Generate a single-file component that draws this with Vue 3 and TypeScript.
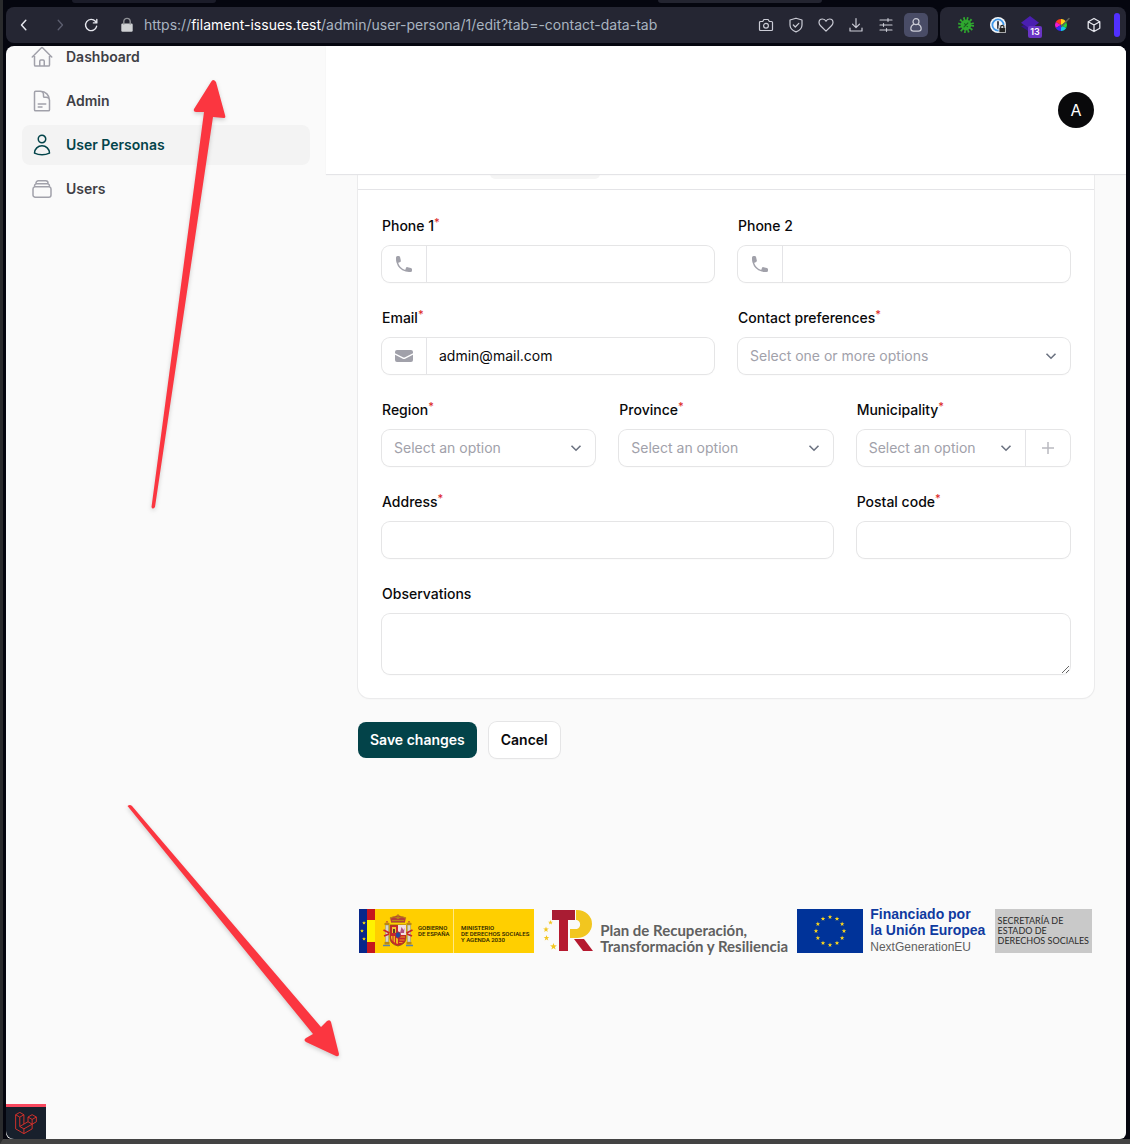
<script setup lang="ts">
import { reactive } from 'vue'

interface NavItem {
  label: string
  icon: string
  active?: boolean
}

interface ToolIcon {
  label: string
  paths: string[]
  active?: boolean
}

const navItems: NavItem[] = [
  {
    label: 'Dashboard',
    icon: 'm2.25 12 8.954-8.955c.44-.439 1.152-.439 1.591 0L21.75 12M4.5 9.75v10.125c0 .621.504 1.125 1.125 1.125H9.75v-4.875c0-.621.504-1.125 1.125-1.125h2.25c.621 0 1.125.504 1.125 1.125V21h4.125c.621 0 1.125-.504 1.125-1.125V9.75M8.25 21h8.25',
  },
  {
    label: 'Admin',
    icon: 'M19.5 14.25v-2.625a3.375 3.375 0 0 0-3.375-3.375h-1.5A1.125 1.125 0 0 1 13.5 7.125v-1.5a3.375 3.375 0 0 0-3.375-3.375H8.25m0 12.75h7.5m-7.5 3H12M10.5 2.25H5.625c-.621 0-1.125.504-1.125 1.125v17.25c0 .621.504 1.125 1.125 1.125h12.75c.621 0 1.125-.504 1.125-1.125V11.25a9 9 0 0 0-9-9Z',
  },
  {
    label: 'User Personas',
    icon: 'M15.75 6a3.75 3.75 0 1 1-7.5 0 3.75 3.75 0 0 1 7.5 0ZM4.501 20.118a7.5 7.5 0 0 1 14.998 0A17.933 17.933 0 0 1 12 21.75c-2.676 0-5.216-.584-7.499-1.632Z',
    active: true,
  },
  {
    label: 'Users',
    icon: 'M6 6.878V6a2.25 2.25 0 0 1 2.25-2.25h7.5A2.25 2.25 0 0 1 18 6v.878m-12 0c.235-.083.487-.128.75-.128h10.5c.263 0 .515.045.75.128m-12 0A2.25 2.25 0 0 0 4.5 9v.878m13.5-3A2.25 2.25 0 0 1 19.5 9v.878m0 0a2.246 2.246 0 0 0-.75-.128H5.25c-.263 0-.515.045-.75.128m15 0A2.25 2.25 0 0 1 21 12v6a2.25 2.25 0 0 1-2.25 2.25H5.25A2.25 2.25 0 0 1 3 18v-6c0-.98.626-1.813 1.5-2.122',
  },
]

const tools: ToolIcon[] = [
  {
    label: 'Snapshot',
    paths: [
      'M1.5 5.5a1 1 0 0 1 1-1h2.2l1.2-2h4.2l1.2 2h2.2a1 1 0 0 1 1 1v7a1 1 0 0 1-1 1h-11a1 1 0 0 1-1-1Z',
      'M10.4 8.8a2.4 2.4 0 1 1-4.8 0a2.4 2.4 0 0 1 4.8 0Z',
    ],
  },
  {
    label: 'Protection',
    paths: ['M8 1.2 14 3v5c0 3.2-2.6 5.6-6 6.9C4.600 13.600 2 11.200 2 8V3Z', 'm5.300 8 2 2 3.500-3.700'],
  },
  {
    label: 'Favourite',
    paths: ['M8 14.200 2.300 8.500A3.800 3.800 0 0 1 1 5.600C1 3.500 2.600 2 4.500 2 6 2 7.300 2.800 8 4.200 8.700 2.800 10 2 11.500 2 13.400 2 15 3.500 15 5.600c0 1.100-.5 2.100-1.300 2.900Z'],
  },
  { label: 'Downloads', paths: ['M8 1.500v9M4.500 7.200 8 10.700l3.500-3.500M2 11v3h12v-3'] },
  { label: 'Easy setup', paths: ['M2 3h12M2 8h12M2 13h12M10 1.700v2.600M5.500 6.700v2.600M8.500 11.700v2.600'] },
  {
    label: 'Profile',
    paths: ['M11 4.700a3 3 0 1 1-6 0a3 3 0 0 1 6 0Z', 'M5.800 7.200C4 8 2.800 9.700 2.800 11.600c0 1.600 1.200 2.600 2.700 2.600h5c1.500 0 2.700-1 2.700-2.600 0-1.900-1.200-3.600-3-4.400'],
    active: true,
  },
]

const phoneIcon: string =
  'M2 3.500A1.500 1.500 0 0 1 3.500 2h1.148a1.500 1.500 0 0 1 1.465 1.175l.716 3.223a1.500 1.500 0 0 1-1.052 1.767l-.933.267c-.41.117-.643.555-.48.95a11.542 11.542 0 0 0 6.254 6.254c.395.163.833-.07.95-.48l.267-.933a1.500 1.500 0 0 1 1.767-1.052l3.223.716A1.500 1.500 0 0 1 18 15.352V16.500a1.500 1.500 0 0 1-1.500 1.500H15c-1.149 0-2.263-.15-3.326-.43A13.022 13.022 0 0 1 2.430 8.326 13.019 13.019 0 0 1 2 5V3.500Z'
const envelopeIcon: string =
  'M3 4a2 2 0 0 0-2 2v1.161l8.441 4.221a1.250 1.250 0 0 0 1.118 0L19 7.162V6a2 2 0 0 0-2-2H3ZM19 8.839l-7.770 3.885a2.750 2.750 0 0 1-2.460 0L1 8.839V14a2 2 0 0 0 2 2h14a2 2 0 0 0 2-2V8.839Z'

const form = reactive({
  phone1: '',
  phone2: '',
  email: 'admin@mail.com',
  preferences: '',
  region: '',
  province: '',
  municipality: '',
  address: '',
  postalCode: '',
  observations: '',
})

/* Points of a five-pointed star around a centre. */
function star(cx: number, cy: number, r: number): string {
  return Array.from({ length: 10 }, (_, i) => {
    const radius = i % 2 === 0 ? r : r * 0.4
    const angle = (Math.PI / 5) * i - Math.PI / 2
    return `${(cx + radius * Math.cos(angle)).toFixed(2)},${(cy + radius * Math.sin(angle)).toFixed(2)}`
  }).join(' ')
}

const euStars: string[] = Array.from({ length: 12 }, (_, i) => {
  const angle = (Math.PI / 6) * i
  return star(33 + 14 * Math.sin(angle), 22 - 14 * Math.cos(angle), 2.4)
})
</script>

<template>
  <div class="browser">
    <div class="tab-strip">
      <span class="tab-edge"></span>
      <span class="tab-edge tab-edge-far"></span>
    </div>

    <header class="chrome">
      <div class="address-bar">
        <button class="tool" type="button" aria-label="Back">
          <svg viewBox="0 0 16 16"><path d="M9.800 3.300 5.500 8l4.300 4.700" stroke="#e6e7ee" stroke-width="1.500" /></svg>
        </button>
        <button class="tool tool-forward" type="button" aria-label="Forward">
          <svg viewBox="0 0 16 16"><path d="M6.200 3.300 10.500 8l-4.300 4.700" stroke="#5d5f70" stroke-width="1.300" /></svg>
        </button>
        <button class="tool tool-reload" type="button" aria-label="Reload">
          <svg viewBox="0 0 16 16"><path d="M13.600 9.300A5.600 5.600 0 1 1 12.400 4.300L13.700 5.800M13.800 2.500v3.400h-3.400" stroke="#e6e7ee" stroke-width="1.400" /></svg>
        </button>
        <span class="lock">
          <svg viewBox="0 0 16 16"><rect x="2.300" y="6.500" width="11.400" height="8.300" rx="1.200" fill="#cfd1d4" /><path d="M4.800 7V4.600a3.200 3.200 0 0 1 6.400 0V7" stroke="#8f9196" stroke-width="1.400" /></svg>
        </span>
        <div class="url">https://<span class="host">filament-issues.test</span>/admin/user-persona/1/edit?tab=-contact-data-tab</div>
        <div class="tools">
          <button v-for="tool in tools" :key="tool.label" class="tool" :class="{ 'tool-active': tool.active }" type="button" :aria-label="tool.label">
            <svg viewBox="0 0 16 16"><path v-for="d in tool.paths" :key="d" :d="d" /></svg>
          </button>
        </div>
      </div>

      <div class="extensions">
        <button class="tool" type="button" aria-label="Debug helper">
          <svg viewBox="0 0 16 16">
            <circle cx="8" cy="8" r="6.500" stroke="#2fa82f" stroke-width="3" stroke-linecap="butt" stroke-dasharray="1.600 1.800" />
            <circle cx="8" cy="8" r="5.400" fill="#2fa82f" stroke="none" />
            <path d="M6 9.800 9.900 6M6.500 6.600l3 3" stroke="#1c5f22" stroke-width="1.100" />
          </svg>
        </button>
        <button class="tool" type="button" aria-label="Password manager">
          <svg viewBox="0 0 16 16">
            <circle cx="8" cy="8" r="8" fill="#f4f6f8" stroke="none" />
            <circle cx="8" cy="8" r="5.600" stroke="#3f97e8" stroke-width="1.800" />
            <path d="M8 5v6" stroke="#2b2f3a" stroke-width="1.800" />
            <rect x="8.500" y="8" width="7.500" height="8" rx="1" fill="#d4d6d8" stroke="none" />
            <rect x="9.400" y="11" width="5.800" height="4.300" rx=".6" fill="#222" stroke="none" />
            <path d="M10.700 11v-1a1.600 1.600 0 0 1 3.200 0v1" stroke="#222" stroke-width="1.100" />
          </svg>
        </button>
        <button class="tool tool-badged" type="button" aria-label="Stack">
          <svg viewBox="0 0 16 16"><path d="M8 0 16 6 8 12 0 6Z" fill="#4a1fb0" stroke="none" /><path d="m0 9 8 5.500V12L3 8Z" fill="#35138c" stroke="none" /></svg>
          <span class="badge">13</span>
        </button>
        <button class="tool" type="button" aria-label="Colour picker">
          <svg viewBox="0 0 16 16">
            <path d="M7 8V2a6 6 0 0 1 5.200 3Z" fill="#ffd21a" stroke="none" />
            <path d="M7 8V2a6 6 0 0 0-5.200 3Z" fill="#ff3b1c" stroke="none" />
            <path d="M7 8 1.800 5a6 6 0 0 0 0 6Z" fill="#f01ad0" stroke="none" />
            <path d="M7 8 1.800 11A6 6 0 0 0 7 14Z" fill="#3827f5" stroke="none" />
            <path d="M7 8v6a6 6 0 0 0 5.200-3Z" fill="#12c9e8" stroke="none" />
            <path d="m7 8 5.200 3a6 6 0 0 0 0-6Z" fill="#28d636" stroke="none" />
            <path d="m7.500 9.500 7.500-8" stroke="#5d6258" stroke-width="1.500" />
          </svg>
        </button>
        <button class="tool" type="button" aria-label="Extensions">
          <svg viewBox="0 0 16 16"><path d="m8 1.500 5.800 3.200v6.600L8 14.500l-5.800-3.200V4.700ZM2.200 4.700 8 8l5.800-3.300M8 8v6.500" stroke="#e6e7ee" stroke-width="1.300" /></svg>
        </button>
        <span class="side-handle"></span>
      </div>
    </header>

    <div class="page">
      <aside class="sidebar">
        <nav class="nav">
          <a v-for="item in navItems" :key="item.label" href="#" class="nav-link" :class="{ 'nav-active': item.active }">
            <svg viewBox="0 0 24 24"><path :d="item.icon" /></svg>
            <span>{{ item.label }}</span>
          </a>
        </nav>
      </aside>

      <div class="main">
        <div class="topbar">
          <button class="avatar" type="button">A</button>
        </div>

        <main class="content">
          <form class="form" @submit.prevent>
            <section class="card">
              <div class="tabs"><span class="tab-current"></span></div>
              <div class="fields">
                <div class="field span-3">
                  <label for="phone1">Phone 1<sup>*</sup></label>
                  <div class="control">
                    <span class="prefix"><svg viewBox="0 0 20 20"><path :d="phoneIcon" /></svg></span>
                    <input id="phone1" v-model="form.phone1" type="tel" />
                  </div>
                </div>
                <div class="field span-3">
                  <label for="phone2">Phone 2</label>
                  <div class="control">
                    <span class="prefix"><svg viewBox="0 0 20 20"><path :d="phoneIcon" /></svg></span>
                    <input id="phone2" v-model="form.phone2" type="tel" />
                  </div>
                </div>
                <div class="field span-3">
                  <label for="email">Email<sup>*</sup></label>
                  <div class="control">
                    <span class="prefix"><svg viewBox="0 0 20 20"><path :d="envelopeIcon" /></svg></span>
                    <input id="email" v-model="form.email" type="email" />
                  </div>
                </div>
                <div class="field span-3">
                  <label for="preferences">Contact preferences<sup>*</sup></label>
                  <div class="control">
                    <div class="picker">
                      <select id="preferences" v-model="form.preferences"><option value="">Select one or more options</option></select>
                      <svg viewBox="0 0 12 12"><path d="m1.500 3.700 4.500 4.500 4.500-4.500" /></svg>
                    </div>
                  </div>
                </div>
                <div class="field span-2">
                  <label for="region">Region<sup>*</sup></label>
                  <div class="control">
                    <div class="picker">
                      <select id="region" v-model="form.region"><option value="">Select an option</option></select>
                      <svg viewBox="0 0 12 12"><path d="m1.500 3.700 4.500 4.500 4.500-4.500" /></svg>
                    </div>
                  </div>
                </div>
                <div class="field span-2">
                  <label for="province">Province<sup>*</sup></label>
                  <div class="control">
                    <div class="picker">
                      <select id="province" v-model="form.province"><option value="">Select an option</option></select>
                      <svg viewBox="0 0 12 12"><path d="m1.500 3.700 4.500 4.500 4.500-4.500" /></svg>
                    </div>
                  </div>
                </div>
                <div class="field span-2">
                  <label for="municipality">Municipality<sup>*</sup></label>
                  <div class="control">
                    <div class="picker">
                      <select id="municipality" v-model="form.municipality"><option value="">Select an option</option></select>
                      <svg viewBox="0 0 12 12"><path d="m1.500 3.700 4.500 4.500 4.500-4.500" /></svg>
                    </div>
                    <button class="suffix" type="button" aria-label="Create municipality">
                      <svg viewBox="0 0 20 20"><path d="M10 4v12M4 10h12" /></svg>
                    </button>
                  </div>
                </div>
                <div class="field span-4">
                  <label for="address">Address<sup>*</sup></label>
                  <div class="control"><input id="address" v-model="form.address" type="text" /></div>
                </div>
                <div class="field span-2">
                  <label for="postal">Postal code<sup>*</sup></label>
                  <div class="control"><input id="postal" v-model="form.postalCode" type="text" /></div>
                </div>
                <div class="field span-6">
                  <label for="observations">Observations</label>
                  <div class="control"><textarea id="observations" v-model="form.observations" rows="2"></textarea></div>
                </div>
              </div>
            </section>

            <div class="actions">
              <button class="btn btn-primary" type="submit">Save changes</button>
              <button class="btn btn-plain" type="button">Cancel</button>
            </div>
          </form>
        </main>

        <footer class="sponsors">
          <div class="gov">
            <svg class="gov-flags" viewBox="0 0 16 44" preserveAspectRatio="none">
              <rect width="8" height="44" fill="#07278a" />
              <rect x="8" width="8" height="44" fill="#c5161d" />
              <rect x="8" y="11" width="8" height="22" fill="#fff200" />
              <polygon v-for="p in [star(5, 14, 2), star(3, 22, 2), star(5, 30, 2)]" :key="p" :points="p" fill="#ffe600" />
            </svg>
            <svg class="gov-arms" viewBox="0 0 32 34">
              <path d="M9 8 8 3.500 12 2.500 16 1l4 1.500 4 1L23 8Z" fill="#b5403a" />
              <path d="M8 4.500Q12 1 16 4.500 20 1 24 4.500M16 0v4M9 8.500h14M10 6.500h12" stroke="#b98814" stroke-width="1.200" fill="none" />
              <path d="M8 11h16v13q0 6-8 8-8-2-8-8Z" fill="#c9252c" stroke="#86571a" stroke-width=".8" />
              <path d="M16 11h8v10h-8Z" fill="#f1dfdf" />
              <path d="m18 19 1.500-6 2 3 1-2-.5 5Z" fill="#b04f80" />
              <path d="M10 13h4v6h-4Z" fill="#f1c232" /><path d="M11 15h2v4h-2Z" fill="#5c3b2a" />
              <path d="M9 22h7v8q-6-2-7-6Z" fill="#efb71d" /><path d="M11 22v6M13.500 22v8" stroke="#c9252c" stroke-width="1" />
              <path d="M18 23h5M17.500 26h5M17 28.500h3.500" stroke="#efb71d" stroke-width=".8" />
              <ellipse cx="16" cy="21" rx="2.600" ry="3.200" fill="#234a9c" stroke="#c9252c" stroke-width=".8" />
              <path d="M3.500 11h3v17h-3ZM25.500 11h3v17h-3Z" fill="#d8d5cc" stroke="#8a8c85" stroke-width=".5" />
              <path d="M2.500 9h5v2h-5ZM24.500 9h5v2h-5ZM2.500 28h5v2.500h-5ZM24.500 28h5v2.500h-5Z" fill="#b98814" />
              <path d="M1 31.500h7M24 31.500h7" stroke="#5c83a8" stroke-width="1.500" />
              <path d="m1.500 16 6 3M2 22l5-2M24.500 19l6-3M25 20l5 2" stroke="#c9252c" stroke-width="1.800" />
              <path d="M3.500 8.500q1.500-3 3 0ZM25.500 8.500q1.500-3 3 0Z" fill="#b5403a" />
            </svg>
            <span class="gov-name">GOBIERNO<br />DE ESPAÑA</span>
            <span class="gov-ministry">MINISTERIO<br />DE DERECHOS SOCIALES<br />Y AGENDA 2030</span>
          </div>

          <div class="plan">
            <svg viewBox="0 0 52 44">
              <path d="M9 1h23v10H9Z" fill="#a91c33" />
              <path d="M16 11h9v31h-9Z" fill="#b5192f" />
              <path d="M33 1h1a15 14 0 0 1 0 28h-7v-9h7a5.500 5 0 0 0 0-9h-1Z" fill="#f2c61f" />
              <path d="M31 30h10l9 12H40Z" fill="#b5192f" />
              <polygon v-for="p in [star(7.5, 13.5, 2.6), star(3, 20.5, 3), star(3.5, 29, 3), star(10.5, 37.5, 3.6)]" :key="p" :points="p" fill="#f2c61f" />
            </svg>
            <p>Plan de Recuperación,<br />Transformación y Resiliencia</p>
          </div>

          <div class="eu">
            <svg viewBox="0 0 66 44">
              <rect width="66" height="44" fill="#003399" />
              <polygon v-for="p in euStars" :key="p" :points="p" fill="#ffd91a" />
            </svg>
            <p><strong>Financiado por<br />la Unión Europea</strong><span>NextGenerationEU</span></p>
          </div>

          <div class="secretary">SECRETARÍA DE<br />ESTADO DE<br />DERECHOS SOCIALES</div>
        </footer>
      </div>

      <button class="debugbar" type="button" aria-label="Open debug bar">
        <svg viewBox="0 0 24 24">
          <path d="M.7 3 5.200.4 9.700 3 5.200 5.600ZM.7 3v15.400l9 5.200 9-5.200V8.100M9.700 23.600v-5.200l-4.500-2.600V5.600M9.700 3v10.200M14.200 5.500l4.500-2.600 4.600 2.600-4.600 2.600ZM14.200 5.500v5.100l4.500 2.700 4.600-2.600V5.500M14.200 10.600l-9 5.200M18.700 13.300l-9 5.100" />
        </svg>
      </button>
    </div>

    <svg class="arrow arrow-up" viewBox="0 0 84 440" aria-hidden="true">
      <path d="M14.500 433Q15.500 436 18 433L76 43 87 44Q89 44 88 41L79 8Q76 4 74 8L57 35Q56 38 59 38L67 38Z" />
    </svg>
    <svg class="arrow arrow-down" viewBox="0 0 220 260" aria-hidden="true">
      <path d="M10.500 6Q13 4 15 6L204 227 210 221Q213 219 214 222L222 254Q222 257 219 256L189 242Q186 240 189 238L196 234Z" />
    </svg>
  </div>
</template>

<style>
body {
  margin: 0;
  background: #05060f;
}
</style>

<style scoped>
.browser {
  position: relative;
  box-sizing: border-box;
  display: flex;
  flex-direction: column;
  min-height: 100vh;
  padding: 0 4px 0 3px;
  border-bottom: 5px solid #434343;
  border-left: 3px solid #2a2b2d;
  background: #05060f;
  font-family: Inter, 'Liberation Sans', sans-serif;
  font-size: 14px;
  line-height: 24px;
  color: #09090b;
}

.browser *,
.browser *::before {
  box-sizing: border-box;
}

button,
input,
select,
textarea {
  margin: 0;
  padding: 0;
  border: 0;
  background: none;
  font: inherit;
  color: inherit;
}

.tab-strip {
  display: flex;
  height: 7px;
  padding: 0 304px 0 66px;
  justify-content: space-between;
}

.tab-edge {
  width: 144px;
  height: 3px;
  border-radius: 0 0 6px 6px;
  background: #1b1c29;
}

.tab-edge-far {
  width: 164px;
  background: #232430;
}

.chrome {
  display: flex;
  gap: 2px;
  margin-bottom: 3px;
}

.address-bar,
.extensions {
  display: flex;
  align-items: center;
  height: 36px;
  border-radius: 8px;
  background: #252633;
}

.address-bar {
  flex: 1;
  min-width: 0;
  padding: 0 10px 0 6px;
}

.extensions {
  gap: 8px;
  padding: 0 6px 0 14px;
}

.tool,
.lock {
  position: relative;
  display: flex;
  flex: none;
  align-items: center;
  justify-content: center;
  width: 24px;
  height: 24px;
  border-radius: 5px;
}

.tool svg,
.lock svg {
  width: 16px;
  height: 16px;
  fill: none;
  stroke: #cbccd6;
  stroke-width: 1.2;
  stroke-linecap: round;
  stroke-linejoin: round;
}

.lock svg rect {
  stroke: none;
}

.tool-forward,
.lock {
  margin-left: 12px;
}

.tool-reload {
  margin-left: 7px;
}

.tool-active {
  background: #494c66;
}

.tool-badged svg {
  width: 18px;
  height: 18px;
}

.badge {
  position: absolute;
  right: 0;
  bottom: -1px;
  width: 14px;
  height: 12px;
  border-radius: 2px;
  background: #6a35c4;
  font-size: 9px;
  font-weight: 600;
  line-height: 12px;
  text-align: center;
  color: #fff;
}

.url {
  flex: 1;
  overflow: hidden;
  margin-left: 5px;
  white-space: nowrap;
  color: #a9b4c0;
}

.host {
  color: #fff;
}

.tools {
  display: flex;
  gap: 6px;
}

.side-handle {
  width: 6px;
  height: 24px;
  border-radius: 3px;
  background: #5130ff;
}

.page {
  position: relative;
  display: flex;
  flex: 1;
  overflow: hidden;
  border-radius: 8px 8px 6px 6px;
  background: #fafafa;
}

.sidebar {
  flex: none;
  width: 320px;
  padding: 0 16px;
}

/* The list is scrolled a little under the window's top edge. */
.nav {
  display: flex;
  flex-direction: column;
  gap: 4px;
  margin-top: -9px;
}

.nav-link {
  display: flex;
  align-items: center;
  gap: 12px;
  height: 40px;
  padding: 0 8px;
  border-radius: 8px;
  font-weight: 600;
  text-decoration: none;
  color: #3f3f46;
}

.nav-link svg {
  width: 24px;
  height: 24px;
  fill: none;
  stroke: #a1a1aa;
  stroke-width: 1.5;
  stroke-linecap: round;
  stroke-linejoin: round;
}

.nav-active {
  background: #f3f3f3;
  color: #03444a;
}

.nav-active svg {
  stroke: #03444a;
}

.main {
  flex: 1;
  min-width: 0;
}

.topbar {
  position: relative;
  display: flex;
  align-items: center;
  justify-content: flex-end;
  height: 128px;
  padding: 0 32px;
  background: #fff;
  box-shadow: 0 1px 1px #e4e4e7;
}

.avatar {
  width: 36px;
  height: 36px;
  border-radius: 50%;
  background: #09090b;
  font-size: 16px;
  color: #fff;
}

.content {
  padding: 0 32px;
}

.form {
  display: flex;
  flex-direction: column;
  gap: 24px;
}

.card {
  border-radius: 0 0 12px 12px;
  background: #fff;
  box-shadow: 0 0 0 1px #ebebec, 0 1px 2px #0000000d;
}

.tabs {
  height: 16px;
  padding: 0 132px;
  border-bottom: 1px solid #e4e4e7;
}

.tab-current {
  display: block;
  width: 110px;
  height: 5px;
  border-radius: 0 0 8px 8px;
  background: #f5f5f5;
}

.fields {
  display: grid;
  grid-template-columns: repeat(6, minmax(0, 1fr));
  gap: 24px;
  padding: 24px;
}

.span-2 {
  grid-column: span 2;
}

.span-3 {
  grid-column: span 3;
}

.span-4 {
  grid-column: span 4;
}

.span-6 {
  grid-column: span 6;
}

.field {
  display: flex;
  flex-direction: column;
  gap: 8px;
}

label {
  font-weight: 500;
}

sup {
  font-size: 11px;
  line-height: 0;
  vertical-align: 5px;
  color: #dc2626;
}

.control {
  display: flex;
  min-height: 36px;
  border-radius: 8px;
  background: #fff;
  box-shadow: 0 0 0 1px #e5e5e6, 0 1px 2px #0000000d;
}

.control input,
.control select,
.control textarea {
  flex: 1;
  min-width: 0;
  padding: 0 12px;
  outline: 0;
}

.control textarea {
  height: 60px;
  padding: 6px 12px;
  border-radius: 8px;
  resize: vertical;
}

.prefix,
.suffix {
  display: flex;
  flex: none;
  align-items: center;
  justify-content: center;
  width: 45px;
}

.prefix {
  border-right: 1px solid #e4e4e7;
}

.suffix {
  border-left: 1px solid #e4e4e7;
}

.prefix svg,
.suffix svg {
  width: 20px;
  height: 20px;
  fill: #a1a1aa;
}

.suffix svg {
  fill: none;
  stroke: #b9b9c0;
  stroke-width: 1.5;
}

.picker {
  display: grid;
  flex: 1;
  min-width: 0;
  align-items: center;
}

.picker select,
.picker svg {
  grid-area: 1 / 1;
}

.picker select {
  width: 100%;
  height: 36px;
  appearance: none;
  color: #a1a1aa;
}

.picker svg {
  justify-self: end;
  width: 12px;
  height: 12px;
  margin-right: 13px;
  fill: none;
  stroke: #6b7280;
  stroke-width: 1.6;
  pointer-events: none;
}

.actions {
  display: flex;
  gap: 12px;
}

.btn {
  height: 36px;
  padding: 0 12px;
  border-radius: 8px;
  font-weight: 600;
}

.btn-primary {
  background: #034349;
  color: #fff;
}

.btn-plain {
  background: #fff;
  box-shadow: 0 0 0 1px #e5e5e6, 0 1px 2px #0000000d;
}

.sponsors {
  display: flex;
  align-items: center;
  justify-content: space-between;
  padding: 148px 34px 148px 33px;
}

.sponsors p {
  margin: 0;
}

.gov {
  display: flex;
  flex: none;
  align-items: center;
  width: 175px;
  height: 44px;
  background: #ffcf00;
  font-family: Roboto, 'Liberation Sans', sans-serif;
  font-size: 6px;
  font-weight: 500;
  line-height: 6px;
  color: #1f1a00;
}

.gov-flags {
  width: 16px;
  height: 44px;
}

.gov-arms {
  width: 32px;
  height: 34px;
  margin: 0 4px 0 7px;
}

.gov-name {
  width: 36px;
  height: 44px;
  padding-top: 16px;
  border-right: 1px solid #ffe884;
}

.gov-ministry {
  height: 44px;
  padding: 16px 0 0 7px;
  white-space: nowrap;
}

.plan {
  display: flex;
  align-items: center;
  gap: 5px;
}

.plan svg {
  width: 52px;
  height: 44px;
}

.plan p {
  padding-top: 13px;
  font-family: Lato, 'Open Sans', sans-serif;
  font-size: 15px;
  font-weight: 700;
  line-height: 16px;
  white-space: nowrap;
  color: #606060;
}

.eu {
  display: flex;
  align-items: center;
  gap: 7px;
  font-family: 'Liberation Sans', Arial, sans-serif;
  white-space: nowrap;
}

.eu svg {
  width: 66px;
  height: 44px;
}

.eu strong {
  display: block;
  font-size: 14px;
  line-height: 16px;
  color: #0f3aa0;
}

.eu span {
  display: block;
  font-size: 12px;
  line-height: 18px;
  color: #606060;
}

.secretary {
  height: 44px;
  padding: 7px 3px 0;
  background: #c9c9c9;
  font-family: Lato, 'Liberation Sans', sans-serif;
  font-size: 9px;
  line-height: 10px;
  white-space: nowrap;
  color: #2b2b2b;
}

.debugbar {
  position: absolute;
  bottom: 0;
  left: 0;
  display: flex;
  align-items: center;
  justify-content: center;
  width: 40px;
  height: 35px;
  border-top: 3px solid #f8485e;
  border-radius: 0 0 0 8px;
  background: #18202c;
}

.debugbar svg {
  width: 22px;
  height: 22px;
  fill: none;
  stroke: #e0322c;
  stroke-width: 1;
  stroke-linejoin: round;
}

.arrow {
  position: absolute;
  fill: #fb3640;
  filter: drop-shadow(0 2px 2px #0000002e);
  overflow: visible;
  pointer-events: none;
}

.arrow-up {
  top: 74px;
  left: 134px;
  width: 84px;
  height: 440px;
}

.arrow-down {
  top: 800px;
  left: 114px;
  width: 220px;
  height: 260px;
}
</style>
